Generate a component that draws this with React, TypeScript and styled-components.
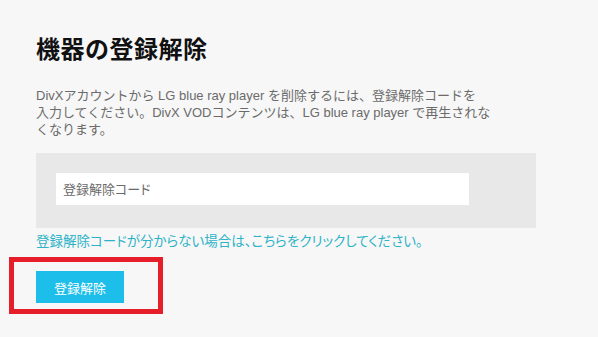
import React from "react";
import styled, { createGlobalStyle } from "styled-components";

const GlobalStyle = createGlobalStyle`
  html, body {
    margin: 0;
    padding: 0;
    background: #f7f7f7;
  }
  body {
    font-family: "Liberation Sans", "Noto Sans CJK JP", sans-serif;
    -webkit-font-smoothing: antialiased;
  }
`;

const Page = styled.div`
  width: 598px;
  height: 337px;
  box-sizing: border-box;
  padding: 28px 0 0 36px;
  background: #f7f7f7;
  overflow: hidden;
`;

const Title = styled.h1`
  margin: 0;
  font-size: 24px;
  letter-spacing: 0.5px;
  line-height: 44px;
  font-weight: 700;
  color: #111;
  font-family: "Liberation Sans", "Noto Sans CJK JP", sans-serif;
`;

const Description = styled.p`
  margin: 15px 0 0;
  font-size: 13px;
  line-height: 17px;
  color: #6b6b6b;
`;

const CodeBox = styled.div`
  margin-top: 15px;
  width: 500px;
  height: 75px;
  box-sizing: border-box;
  padding: 20px;
  background: #e8e8e8;
`;

const CodeInput = styled.input`
  display: block;
  width: 413px;
  height: 32px;
  box-sizing: border-box;
  border: none;
  outline: none;
  background: #ffffff;
  padding: 0 7px;
  font-family: "Liberation Sans", "Noto Sans CJK JP", sans-serif;
  font-size: 13px;
  color: #555;
  font-feature-settings: "palt";
  &::placeholder {
    color: #6a6a6a;
  }
`;

const HelpLink = styled.a`
  display: block;
  margin-top: 5px;
  font-size: 13.5px;
  line-height: 17px;
  color: #2db3c8;
  text-decoration: none;
  font-feature-settings: "palt";
  cursor: pointer;
`;

const ButtonArea = styled.div`
  position: relative;
  margin-top: 21px;
`;

const Highlight = styled.div`
  position: absolute;
  left: -27px;
  top: -14px;
  width: 154px;
  height: 57px;
  box-sizing: border-box;
  border: 5px solid #e61e2a;
  pointer-events: none;
`;

const SubmitButton = styled.button`
  display: block;
  width: 88px;
  height: 32px;
  border: none;
  padding: 0;
  background: #1ebeeb;
  color: #ffffff;
  font-family: "Liberation Sans", "Noto Sans CJK JP", sans-serif;
  font-size: 13px;
  cursor: pointer;
`;

export default function App() {
  return (
    <>
      <GlobalStyle />
      <Page>
        <Title>機器の登録解除</Title>
        <Description>
          DivXアカウントから LG blue ray player を削除するには、登録解除コードを
          <br />
          入力してください。DivX VODコンテンツは、LG blue ray player で再生されな
          <br />
          くなります。
        </Description>
        <CodeBox>
          <CodeInput placeholder="登録解除コード" />
        </CodeBox>
        <HelpLink>登録解除コードが分からない場合は、こちらをクリックしてください。</HelpLink>
        <ButtonArea>
          <Highlight />
          <SubmitButton>登録解除</SubmitButton>
        </ButtonArea>
      </Page>
    </>
  );
}
